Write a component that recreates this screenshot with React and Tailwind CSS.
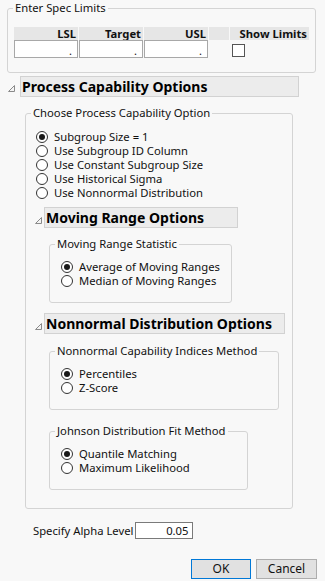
import React from 'react';

const Tri = ({ className = '' }) => (
  <svg width="7" height="7" viewBox="0 0 7 7" className={className}>
    <polygon points="0.5,6.5 6.5,6.5 6.5,0.5" fill="#f4f4f4" stroke="#8a8a8a" strokeWidth="1" />
  </svg>
);

const Radio = ({ checked, label }) => (
  <div className="flex items-center h-[14px]">
    <span className="w-[12px] h-[12px] rounded-full border border-[#333] bg-white flex items-center justify-center shrink-0">
      {checked && <span className="w-[6px] h-[6px] rounded-full bg-[#1a1a1a]" />}
    </span>
    <span className="ml-[6px] leading-[14px] whitespace-nowrap">{label}</span>
  </div>
);

// legend sits at border + 5px; content padding goes on the inner div
const Group = ({ legend, className = '', inner = '', children }) => (
  <fieldset className={`border border-[#d4d4d4] rounded-[3px] ${className}`}>
    <legend className="ml-[5px] px-[2px] h-[14px] leading-[14px] whitespace-nowrap">{legend}</legend>
    <div className={inner}>{children}</div>
  </fieldset>
);

const Header = ({ title, width, triClass }) => (
  <div className="flex items-center h-[21px]">
    <Tri className={triClass} />
    <div className={`h-[21px] ${width} bg-[#ececec] border border-[#d2d2d2] flex items-center pl-[1px]`}>
      <span className="font-bold text-[14px] leading-[18px] text-black whitespace-nowrap">{title}</span>
    </div>
  </div>
);

const SpecInput = () => (
  <div className="h-[18px] bg-white border border-[#a8a8a8] flex items-end justify-end pr-[5px] text-[11px] leading-[13px]">.</div>
);

export default function App() {
  return (
    <div
      className="w-[325px] h-[581px] bg-[#f8f8f8] text-[11.25px] text-[#111] overflow-hidden pt-[1px]"
      style={{ fontFamily: '"Noto Sans", "Open Sans", sans-serif' }}
    >
      {/* Enter Spec Limits */}
      <Group legend="Enter Spec Limits" className="ml-[7px] w-[309px]" inner="pl-[6px] pb-[14px] pt-[12px]">
        <div className="grid grid-cols-[64px_64px_64px_20px_79px] gap-x-[1px] w-[295px]">
          {['LSL', 'Target', 'USL', '', 'Show Limits'].map((h, i) => (
            <div key={i} className="h-[13px] bg-[#e6e6e6] text-right pr-[2px] font-bold leading-[13px] whitespace-nowrap">{h}</div>
          ))}
          <SpecInput />
          <SpecInput />
          <SpecInput />
          <div />
          <div className="mt-[4px] pl-[2px]">
            <div className="w-[13px] h-[13px] bg-white border border-[#555]" />
          </div>
        </div>
      </Group>

      {/* Process Capability Options */}
      <div className="mt-[3px] ml-[8px]">
        <Header title="Process Capability Options" width="w-[279px]" triClass="mt-[4px] mr-[5px]" />
      </div>

      <Group legend="Choose Process Capability Option" className="mt-[9px] ml-[25px] w-[268px]" inner="pl-[10px] pb-[18px] pt-[10px]">
        <div>
          <Radio checked label="Subgroup Size = 1" />
          <Radio label="Use Subgroup ID Column" />
          <Radio label="Use Constant Subgroup Size" />
          <Radio label="Use Historical Sigma" />
          <Radio label="Use Nonnormal Distribution" />
        </div>

        <div className="mt-[7px] -ml-[1px]">
          <Header title="Moving Range Options" width="w-[194px]" triClass="mt-[6px] mr-[2px]" />
        </div>

        <Group legend="Moving Range Statistic" className="mt-[9px] ml-[13px] w-[183px]" inner="pl-[11px] pb-[14px] pt-[9px]">
          <Radio checked label="Average of Moving Ranges" />
          <Radio label="Median of Moving Ranges" />
        </Group>

        <div className="mt-[10px] -ml-[1px]">
          <Header title="Nonnormal Distribution Options" width="w-[241px]" triClass="mt-[6px] mr-[2px]" />
        </div>

        <Group legend="Nonnormal Capability Indices Method" className="mt-[10px] ml-[13px] w-[230px]" inner="pl-[11px] pb-[14px] pt-[9px]">
          <Radio checked label="Percentiles" />
          <Radio label="Z-Score" />
        </Group>

        <Group legend="Johnson Distribution Fit Method" className="mt-[14px] ml-[13px] w-[199px]" inner="pl-[11px] pb-[14px] pt-[9px]">
          <Radio checked label="Quantile Matching" />
          <Radio label="Maximum Likelihood" />
        </Group>
      </Group>

      {/* Alpha level */}
      <div className="mt-[13px] ml-[33px] flex items-center h-[17px]">
        <span className="leading-[14px] whitespace-nowrap">Specify Alpha Level</span>
        <div className="ml-[2px] w-[58px] h-[17px] bg-white border border-[#7a7a7a] text-right pr-[4px] leading-[15px]">0.05</div>
      </div>

      {/* Buttons */}
      <div className="mt-[20px] ml-[191px] flex gap-[5px]">
        <button className="w-[60px] h-[20px] bg-[#e1e1e1] border border-[#0078d7] leading-[18px] text-[12px]">OK</button>
        <button className="w-[61px] h-[20px] bg-[#e1e1e1] border border-[#adadad] leading-[18px] text-[12px]">Cancel</button>
      </div>
    </div>
  );
}
